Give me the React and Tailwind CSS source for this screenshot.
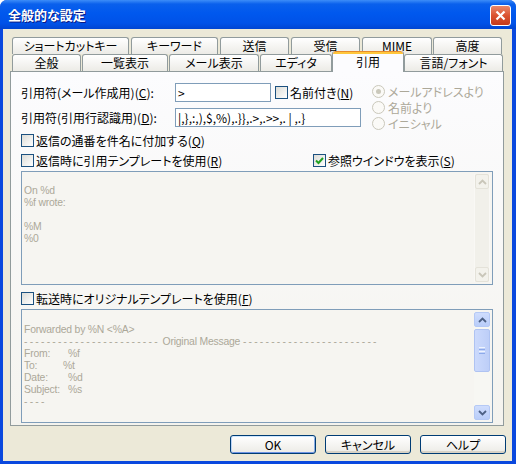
import React from "react";

const rowOne = [
  { label: "ショートカットキー", cls: "w-[117px]" },
  { label: "キーワード", cls: "w-[87px] ml-[2px]" },
  { label: "送信", cls: "w-[69px] ml-[2px]" },
  { label: "受信", cls: "w-[69px] ml-[2px]" },
  { label: "MIME", cls: "w-[70px] ml-[2px]" },
  { label: "高度", cls: "w-[69px] ml-[1px]" },
];

const rowTwo = [
  { label: "全般", cls: "w-[69px]" },
  { label: "一覧表示", cls: "w-[86px] ml-[1px]" },
  { label: "メール表示", cls: "w-[90px] ml-[1px]" },
  { label: "エディタ", cls: "w-[72px] ml-[1px]" },
  { label: "引用", cls: "w-[72px]", selected: true },
  { label: "言語/フォント", cls: "w-[99px]" },
];

function Tab({ label, cls, selected, back }) {
  if (selected) {
    return (
      <div className={`${cls} relative z-10 flex h-[21px] translate-y-px flex-col overflow-hidden rounded-t-[3px] border-x border-[#919B9C] bg-[#FCFCFE]`}>
        <div className="h-[3px] shrink-0 rounded-t-[3px] border-t border-[#E68B2C] bg-[#FFC73C]" />
        <div className="text-center leading-[15px]">{label}</div>
      </div>
    );
  }
  return (
    <div
      className={`${cls} h-[17px] shrink-0 rounded-t-[3px] border border-b-0 border-[#919B9C] bg-linear-to-b from-white to-[#ECEBE6] text-center ${
        back ? "leading-[15px]" : "leading-[16px]"
      }`}
    >
      {label}
    </div>
  );
}

function Checkbox({ checked }) {
  return (
    <span className="flex h-[13px] w-[13px] shrink-0 items-center justify-center border border-[#1C5180] bg-linear-to-br from-[#DCDCD7] to-white">
      {checked && (
        <svg width="9" height="8" viewBox="0 0 9 8">
          <path d="M1 3.5 L3.5 6 L8 1" stroke="#21A121" strokeWidth="2" fill="none" />
        </svg>
      )}
    </span>
  );
}

function Check({ checked, children, cls = "" }) {
  return (
    <div className={`flex h-[13px] items-center gap-[2px] leading-[13px] ${cls}`}>
      <Checkbox checked={checked} />
      <span className="whitespace-nowrap">{children}</span>
    </div>
  );
}

function Radio({ checked, label }) {
  return (
    <div className="flex h-[13px] items-center gap-[3px] leading-[13px] text-[#ACA899]">
      <span className="flex h-[13px] w-[13px] items-center justify-center rounded-full border border-[#CAC8BB] bg-[#FBFAF7]">
        {checked && <span className="h-[5px] w-[5px] rounded-full bg-[#CAC8BB]" />}
      </span>
      <span className="whitespace-nowrap">{label}</span>
    </div>
  );
}

function Chevron({ up, color }) {
  return (
    <svg width="9" height="6" viewBox="0 0 9 6">
      <polyline
        points={up ? "1,5 4.5,1.5 8,5" : "1,1 4.5,4.5 8,1"}
        fill="none"
        stroke={color}
        strokeWidth="1.8"
      />
    </svg>
  );
}

function ScrollBar({ enabled }) {
  if (!enabled) {
    return (
      <div className="my-[2px] mr-[2px] flex w-[16px] flex-col justify-between border-x border-[#F9F8F5] bg-[#F1F0EA]">
        <div className="flex h-[15px] items-center justify-center rounded-[2px] border border-[#E4E2D9] bg-[#F3F2EC]">
          <Chevron up color="#C9C6B9" />
        </div>
        <div className="flex h-[15px] items-center justify-center rounded-[2px] border border-[#E4E2D9] bg-[#F3F2EC]">
          <Chevron color="#C9C6B9" />
        </div>
      </div>
    );
  }
  return (
    <div className="my-[2px] mr-[2px] flex w-[16px] flex-col bg-[#F7F7F3]">
      <div className="flex h-[15px] items-center justify-center rounded-[2px] border border-[#B5C9F5] bg-linear-to-b from-[#CFDDFD] to-[#B9CDF9]">
        <Chevron up color="#4D6185" />
      </div>
      <div className="mt-[2px] flex h-[43px] flex-col items-center justify-center gap-[1px] rounded-[2px] border border-[#AFC3F2] bg-linear-to-r from-[#CCDAFC] to-[#BDCEF8]">
        <span className="h-px w-[6px] bg-[#EEF4FE]" />
        <span className="h-px w-[6px] bg-[#8DAAEA]" />
        <span className="h-px w-[6px] bg-[#EEF4FE]" />
        <span className="h-px w-[6px] bg-[#8DAAEA]" />
      </div>
      <div className="flex-1" />
      <div className="flex h-[15px] items-center justify-center rounded-[2px] border border-[#B5C9F5] bg-linear-to-b from-[#CFDDFD] to-[#B9CDF9]">
        <Chevron color="#4D6185" />
      </div>
    </div>
  );
}

function TextBox({ children, enabledScroll, padTop }) {
  return (
    <div className="flex h-[114px] border border-[#7F9DB9] bg-[#F6F5F1]">
      <div
        className={`flex-1 whitespace-pre pl-[2px] font-['Liberation_Sans',sans-serif] text-[10.4px] leading-[12px] tracking-[-0.2px] text-[#ACA899] ${padTop}`}
      >
        {children}
      </div>
      <ScrollBar enabled={enabledScroll} />
    </div>
  );
}

function Button({ children, isDefault }) {
  return (
    <button
      className={`h-[19px] w-[86px] rounded-[3px] border border-[#003C74] bg-linear-to-b from-white to-[#ECEBE6] text-[12px] leading-[16px] ${
        isDefault
          ? "shadow-[inset_0_1px_0_#CEE7FF,inset_1px_0_0_#BCD4F6,inset_-1px_0_0_#89ADE4,inset_0_-1px_0_#6E94E3]"
          : "shadow-[inset_0_-2px_0_#D8D2C6]"
      }`}
    >
      {children}
    </button>
  );
}

export default function App() {
  return (
    <div className="h-[464px] w-[516px] bg-white font-['Noto_Sans_CJK_JP','Noto_Sans',sans-serif] text-[12px] text-black [font-feature-settings:'palt']">
      <div className="flex h-full flex-col overflow-hidden rounded-t-[7px] bg-[#0A48DE]">
        {/* Title bar */}
        <div className="flex h-[29px] shrink-0 items-center justify-between bg-[linear-gradient(180deg,#3D8DF8_0%,#0A60EC_14%,#0058EE_45%,#0052E8_80%,#0045D2_100%)] pl-[8px] pr-[5px]">
          <span className="text-[13px] font-bold leading-[14px] text-white [text-shadow:1px_1px_#0A1883]">
            全般的な設定
          </span>
          <div className="mt-[2px] flex h-[21px] w-[21px] items-center justify-center rounded-[3px] border border-white bg-linear-to-b from-[#E9876A] via-[#DB5330] to-[#C4391A]">
            <svg width="11" height="11" viewBox="0 0 11 11">
              <path d="M1.5 1.5 L9.5 9.5 M9.5 1.5 L1.5 9.5" stroke="white" strokeWidth="2.2" />
            </svg>
          </div>
        </div>

        {/* Client */}
        <div className="mb-[3px] ml-[3px] mr-[4px] flex flex-1 flex-col bg-[#ECE9D8]">
          <div className="pl-[7px] pt-[8px]">
            <div className="relative z-10 flex flex-col pl-[2px]">
              <div className="flex h-[17px]">
                {rowOne.map((t) => (
                  <Tab key={t.label} {...t} back />
                ))}
              </div>
              <div className="flex h-[17px] items-end">
                {rowTwo.map((t) => (
                  <Tab key={t.label} {...t} />
                ))}
              </div>
            </div>

            {/* Panel */}
            <div className="h-[355px] w-[494px] border border-[#919B9C] bg-linear-to-b from-[#FCFCFE] to-[#F4F3EE] px-[10px] pt-[11px]">
              <div className="flex items-start">
                <div className="flex flex-col">
                  <div className="flex h-[19px] items-center">
                    <span className="w-[154px] whitespace-nowrap">
                      引用符(メール作成用)(<u>C</u>):
                    </span>
                    <div className="h-[19px] w-[96px] border border-[#7F9DB9] bg-white pl-[2px] leading-[17px]">&gt;</div>
                    <Check cls="ml-[4px]">
                      名前付き(<u>N</u>)
                    </Check>
                  </div>
                  <div className="mt-[6px] flex h-[19px] items-center">
                    <span className="w-[154px] whitespace-nowrap">
                      引用符(引用行認識用)(<u>D</u>):
                    </span>
                    <div className="h-[19px] w-[186px] overflow-hidden whitespace-nowrap border border-[#7F9DB9] bg-white pl-[2px] leading-[17px]">
                      |,},:,),$,%),.}},.&gt;,.&gt;&gt;,. | ,.}
                    </div>
                  </div>
                </div>
                <div className="ml-[11px] flex flex-col gap-[3px] pt-[2px]">
                  <Radio checked label="メールアドレスより" />
                  <Radio label="名前より" />
                  <Radio label="イニシャル" />
                </div>
              </div>

              <Check cls="mt-[4px]">
                返信の通番を件名に付加する(<u>Q</u>)
              </Check>

              <div className="mt-[7px] flex items-center">
                <Check cls="w-[292px]">
                  返信時に引用テンプレートを使用(<u>R</u>)
                </Check>
                <Check checked>
                  参照ウインドウを表示(<u>S</u>)
                </Check>
              </div>

              <div className="mt-[4px]">
                <TextBox padTop="pt-[1px]">
                  {"\nOn %d\n%f wrote:\n\n%M\n%0"}
                </TextBox>
              </div>

              <Check cls="mt-[7px]">
                転送時にオリジナルテンプレートを使用(<u>F</u>)
              </Check>

              <div className="mt-[4px]">
                <TextBox enabledScroll padTop="pt-[2px]">
                  <div>{" "}</div>
                  <div>Forwarded by %N &lt;%A&gt;</div>
                  <div>
                    <span className="tracking-[2.2px]">------------------------</span> Original Message{" "}
                    <span className="tracking-[2.2px]">------------------------</span>
                  </div>
                  <div>
                    <span className="inline-block w-[44px]">From:</span>%f
                  </div>
                  <div>
                    <span className="inline-block w-[39px]">To:</span>%t
                  </div>
                  <div>
                    <span className="inline-block w-[44px]">Date:</span>%d
                  </div>
                  <div>
                    <span className="inline-block w-[44px]">Subject:</span>%s
                  </div>
                  <div className="tracking-[2.2px]">----</div>
                </TextBox>
              </div>
            </div>
          </div>

          {/* Buttons */}
          <div className="mt-[9px] flex justify-end gap-[9px] pr-[6px]">
            <Button isDefault>OK</Button>
            <Button>キャンセル</Button>
            <Button>ヘルプ</Button>
          </div>
        </div>
      </div>
    </div>
  );
}
